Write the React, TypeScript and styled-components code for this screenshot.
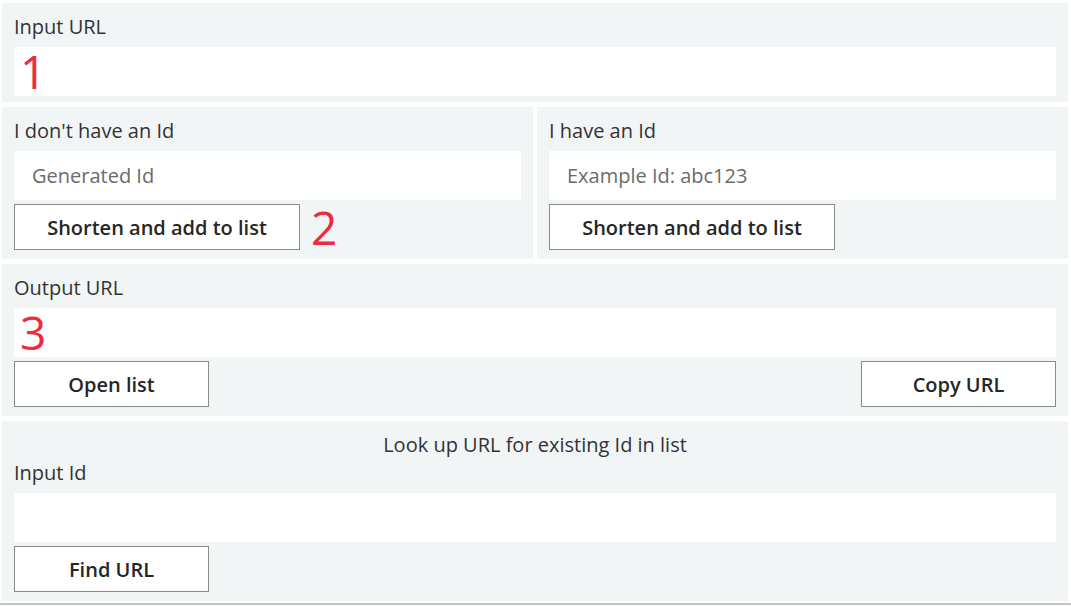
import React from "react";
import styled, { createGlobalStyle } from "styled-components";

const GlobalStyle = createGlobalStyle`
  html, body {
    margin: 0;
    padding: 0;
    background: #ffffff;
  }
  body {
    font-family: "Open Sans", "Noto Sans", sans-serif;
    color: #333333;
  }
  * { box-sizing: border-box; }
`;

const Page = styled.div`
  width: 1071px;
  display: flex;
  flex-direction: column;
`;

const Stack = styled.div`
  display: flex;
  flex-direction: column;
  gap: 5px;
  padding: 3px 3px 0 2px;
`;

const TwoColumns = styled.div`
  display: grid;
  grid-template-columns: 1fr 1fr;
  gap: 4px;
`;

const Panel = styled.section<{ $bottom?: number }>`
  background: #f2f5f6;
  padding: 10px 12px ${(p) => p.$bottom ?? 9}px 12px;
  display: flex;
  flex-direction: column;
`;

const Title = styled.div`
  font-size: 20px;
  line-height: 28px;
  text-align: center;
  color: #333333;
`;

const Label = styled.label`
  font-size: 20px;
  line-height: 28px;
  color: #333333;
  margin-bottom: 6px;
`;

const Field = styled.div`
  position: relative;
`;

const TextInput = styled.input`
  display: block;
  width: 100%;
  height: 49px;
  border: none;
  outline: none;
  background: #ffffff;
  padding: 0 18px;
  font-family: "Open Sans", "Noto Sans", sans-serif;
  font-size: 20px;
  color: #333333;
  &::placeholder {
    color: #6b6b6b;
    opacity: 1;
  }
`;

const Marker = styled.span`
  font-family: "Open Sans", "Noto Sans", sans-serif;
  font-size: 46px;
  line-height: 46px;
  color: #ee2b3d;
  pointer-events: none;
`;

const FieldMarker = styled(Marker)`
  position: absolute;
  left: 6px;
  top: 1px;
`;

const ButtonRow = styled.div<{ $spread?: boolean }>`
  display: flex;
  align-items: center;
  justify-content: ${(p) => (p.$spread ? "space-between" : "flex-start")};
  margin-top: 4px;
`;

const Button = styled.button<{ $wide?: boolean }>`
  width: ${(p) => (p.$wide ? 286 : 195)}px;
  height: 46px;
  background: #ffffff;
  border: 1px solid #8a8a8a;
  border-radius: 0;
  font-family: "Open Sans", "Noto Sans", sans-serif;
  font-size: 20px;
  font-weight: 600;
  color: #262626;
  padding: 0;
  cursor: pointer;
`;

const RowMarker = styled(Marker)`
  margin-left: 11px;
`;

const BottomRule = styled.div`
  height: 2px;
  margin-top: 2px;
  background: #c4c4c4;
`;

export default function App() {
  return (
    <>
      <GlobalStyle />
      <Page>
        <Stack>
          <Panel $bottom={6}>
            <Label>Input URL</Label>
            <Field>
              <TextInput type="text" />
              <FieldMarker>1</FieldMarker>
            </Field>
          </Panel>

          <TwoColumns>
            <Panel>
              <Label>I don't have an Id</Label>
              <TextInput type="text" placeholder="Generated Id" />
              <ButtonRow>
                <Button $wide>Shorten and add to list</Button>
                <RowMarker>2</RowMarker>
              </ButtonRow>
            </Panel>
            <Panel>
              <Label>I have an Id</Label>
              <TextInput type="text" placeholder="Example Id: abc123" />
              <ButtonRow>
                <Button $wide>Shorten and add to list</Button>
              </ButtonRow>
            </Panel>
          </TwoColumns>

          <Panel>
            <Label>Output URL</Label>
            <Field>
              <TextInput type="text" />
              <FieldMarker>3</FieldMarker>
            </Field>
            <ButtonRow $spread>
              <Button>Open list</Button>
              <Button>Copy URL</Button>
            </ButtonRow>
          </Panel>

          <Panel>
            <Title>Look up URL for existing Id in list</Title>
            <Label>Input Id</Label>
            <TextInput type="text" />
            <ButtonRow>
              <Button>Find URL</Button>
            </ButtonRow>
          </Panel>
        </Stack>
        <BottomRule />
      </Page>
    </>
  );
}
